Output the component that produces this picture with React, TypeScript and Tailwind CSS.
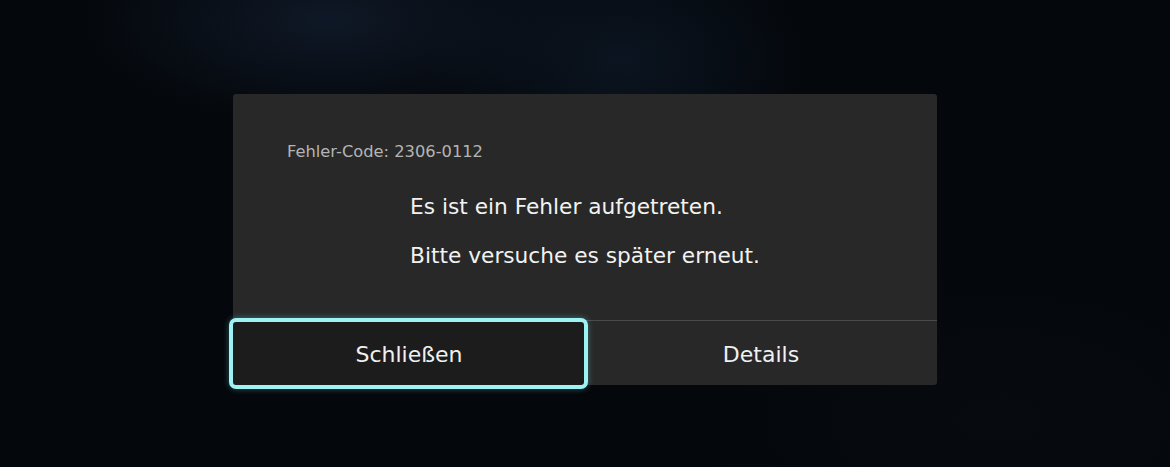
import React from "react";

const App = () => {
  return (
    <div
      className="w-[1170px] h-[467px] overflow-hidden flex items-start justify-center pt-[94px] bg-[#04070b] bg-[radial-gradient(ellipse_260px_110px_at_330px_20px,#0f1826,transparent),radial-gradient(ellipse_200px_140px_at_620px_60px,#0b1420,transparent),radial-gradient(ellipse_300px_160px_at_1000px_420px,#070b10,transparent)]"
      style={{ fontFamily: '"DejaVu Sans", "Noto Sans", sans-serif' }}
    >
      <div className="w-[704px] h-[291px] rounded-[3px] bg-[#282828] flex flex-col">
        {/* message */}
        <div className="flex-1 px-[54px] pt-[48px]">
          <p className="text-[16.3px] text-[#b4b4b4] leading-[20px]">Fehler-Code: 2306-0112</p>
          <div className="w-fit mx-auto mt-[32px] flex flex-col gap-[24px] text-[21.7px] leading-[25px] text-[#f2f2f2]">
            <p>Es ist ein Fehler aufgetreten.</p>
            <p>Bitte versuche es später erneut.</p>
          </div>
        </div>

        {/* buttons */}
        <div className="h-[65px] border-t border-[#4b4b4b] flex">
          <div className="relative w-[352px] flex items-center justify-center">
            <div className="absolute -left-[4px] -top-[3px] -right-[3px] -bottom-[4px] rounded-[7px] border-[4px] border-[#9df2f4] bg-[#1c1c1c] shadow-[0_0_6px_rgba(120,240,245,0.35)]" />
            <span className="relative mt-[3px] text-[22px] text-[#f0f0f0]">Schließen</span>
          </div>
          <div className="flex-1 flex items-center justify-center">
            <span className="mt-[3px] text-[22px] text-[#f0f0f0]">Details</span>
          </div>
        </div>
      </div>
    </div>
  );
};

export default App;
